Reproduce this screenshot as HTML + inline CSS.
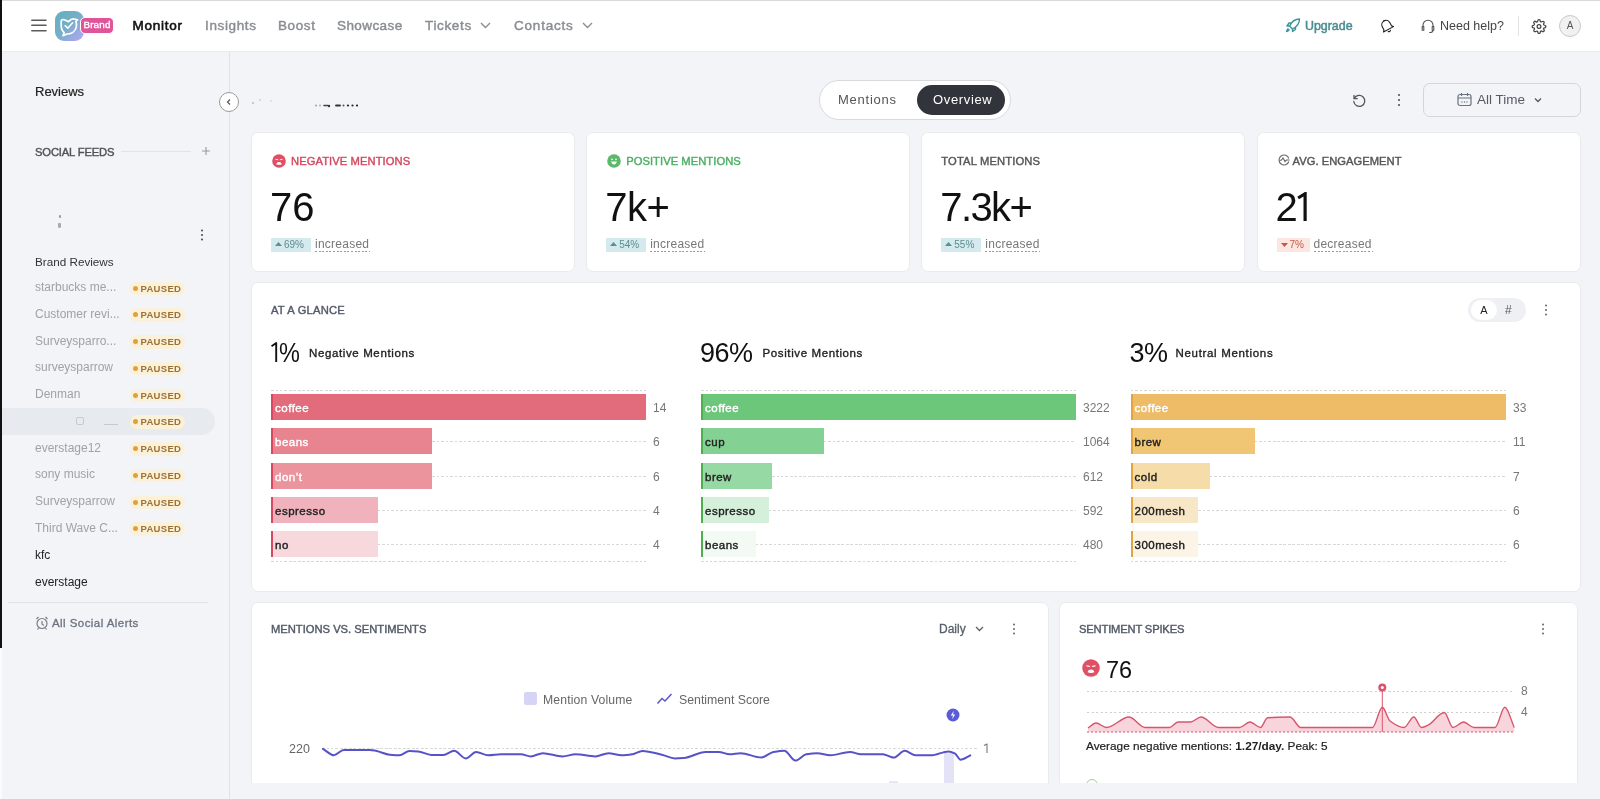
<!DOCTYPE html>
<html><head><meta charset="utf-8">
<style>
*{margin:0;padding:0;box-sizing:border-box}
html,body{width:1600px;height:799px;overflow:hidden;background:#f2f4f7;font-family:"Liberation Sans",sans-serif;color:#222}
.a{position:absolute;white-space:nowrap}
.t{position:absolute;white-space:nowrap;line-height:1}
#topline{left:0;top:0;width:1600px;height:1px;background:#d9d9d9}
#header{left:0;top:1px;width:1600px;height:51px;background:#fff;border-bottom:1px solid #ebecef}
#blk{left:0;top:0;width:2px;height:648px;background:#111}
#sidebar{left:2px;top:52px;width:228px;height:747px;background:#f2f4f7;border-right:1px solid #dfe1e5}
.nav{font-size:13.5px;color:#8a8d93;-webkit-text-stroke:.45px currentColor}
.med{-webkit-text-stroke:.3px currentColor}
.card{position:absolute;background:#fff;border:1px solid #e9eaed;border-radius:7px}
.lbl{font-size:11.2px;-webkit-text-stroke:.42px currentColor}
.big{font-size:40px;color:#111}
.badge{position:absolute;height:13px;font-size:9.5px;line-height:13px;padding:0 4px;border-radius:2px}
.chg{font-size:12px;color:#777;line-height:12px;letter-spacing:.25px}
.sec{font-size:11.2px;color:#535a68;-webkit-text-stroke:.42px currentColor}
.pct{font-size:27px;color:#111;letter-spacing:-0.5px}
.side{font-size:12px;color:#9a9ca2}
.paused{position:absolute;left:130px;width:55px;height:13.5px;border-radius:7px;background:#fbf0d8;color:#9c7236;font-size:9.5px;font-weight:bold;line-height:14px;padding-left:10.5px;letter-spacing:.3px}
.paused:before{content:"";position:absolute;left:3px;top:4px;width:5px;height:5px;border-radius:50%;background:#e0a040}
.bar{position:absolute;height:26px}
.bar span{position:absolute;left:9px;top:8px;font-size:11.5px;line-height:12px;-webkit-text-stroke:.4px currentColor;letter-spacing:.5px}
.val{position:absolute;font-size:12px;color:#777;line-height:12px}
.dl{position:absolute;height:1px;background:repeating-linear-gradient(90deg,#d8d8d8 0 2.5px,transparent 2.5px 4.5px)}
</style></head><body><div id="wrap" style="position:absolute;left:0;top:0;width:1600px;height:799px;will-change:transform">
<div class="a" id="topline"></div>
<div class="a" id="header"></div>
<div class="a" id="sidebar"></div>
<div class="a" id="blk"></div>
<div class="a" style="left:0;top:648px;width:2px;height:151px;background:#fbfbfb"></div>

<!-- HEADER -->
<svg class="a" style="left:30px;top:19px" width="17" height="13" viewBox="0 0 17 13"><path d="M1.8 1.3h14.2M1.8 6.3h14.2M1.8 11.8h14.2" stroke="#5a5a5a" stroke-width="1.5" stroke-linecap="round"/></svg>
<div class="a" style="left:55px;top:11px;width:29px;height:30px;border-radius:9px;background:linear-gradient(135deg,#62b0bf 0%,#75aec8 45%,#a6a8ec 85%,#b6a8f4 100%)"></div>
<svg class="a" style="left:55px;top:11px" width="29" height="30" viewBox="0 0 29 30"><path d="M6.2,10.2 C6.2,8.6 7.6,8.2 9.2,8.8 L13.6,10.6 C15.2,8.8 17.6,7.4 19.6,8 L22.6,8.8 L20.8,10.4 C21.6,12 21.8,14.2 21.2,16.4 C20.2,20.4 16.4,23 12,23 L8,24.6 L9.2,21.6 C7.2,20 6.2,17.4 6.2,14.2 Z" fill="none" stroke="#fff" stroke-width="1.7" stroke-linejoin="round"/><path d="M10.2,14.6 L12.8,17.2 L17.6,11.8" fill="none" stroke="#fff" stroke-width="1.6" stroke-linecap="round" stroke-linejoin="round"/></svg>
<div class="a" style="left:80px;top:17px;width:34px;height:17px;border-radius:5px;background:#e0559a;border:1.5px solid #fff;color:#fff;font-size:9.8px;-webkit-text-stroke:.35px #fff;line-height:14px;text-align:center;letter-spacing:.2px">Brand</div>
<div class="t nav" style="left:132.5px;top:19px;color:#111;font-weight:normal;-webkit-text-stroke:.6px #111;letter-spacing:.75px">Monitor</div>
<div class="t nav" style="left:205px;top:19px;letter-spacing:0.63px">Insights</div>
<div class="t nav" style="left:278px;top:19px;letter-spacing:0.59px">Boost</div>
<div class="t nav" style="left:337px;top:19px;letter-spacing:0.41px">Showcase</div>
<div class="t nav" style="left:425px;top:19px;letter-spacing:0.65px">Tickets</div>
<svg class="a" style="left:480px;top:22px" width="11" height="7" viewBox="0 0 11 7"><path d="M1 1l4.5 4.5L10 1" fill="none" stroke="#8a8d93" stroke-width="1.4"/></svg>
<div class="t nav" style="left:514px;top:19px;letter-spacing:0.8px">Contacts</div>
<svg class="a" style="left:582px;top:22px" width="11" height="7" viewBox="0 0 11 7"><path d="M1 1l4.5 4.5L10 1" fill="none" stroke="#8a8d93" stroke-width="1.4"/></svg>

<svg class="a" style="left:1285px;top:18px" width="16" height="15" viewBox="0 0 16 15"><path d="M14.5 1C10 1 6.5 4 4.5 8l3 3c4-2 7-5.5 7-10z M4.5 8L2 8l2-3h3 M7.5 11v2.5l3-2v-3 M3.5 10.5c-1 .5-2 2.5-2 3 .5 0 2.5-1 3-2" fill="none" stroke="#3d9497" stroke-width="1.4" stroke-linejoin="round"/></svg>
<div class="t" style="left:1305px;top:20px;font-size:12.4px;color:#4a8d91;-webkit-text-stroke:.5px currentColor">Upgrade</div>
<svg class="a" style="left:1378px;top:17px" width="17" height="17" viewBox="0 0 17 17"><g transform="rotate(-28 8.5 8.5)"><path d="M4.2 11.2V7.6a4.3 4.3 0 0 1 8.6 0v3.6l1.4 1.6H2.8z M7 14.2a1.6 1.6 0 0 0 3 0 M8.5 2.2v1" fill="none" stroke="#222" stroke-width="1.1" stroke-linejoin="round"/></g></svg>
<svg class="a" style="left:1420px;top:18px" width="16" height="16" viewBox="0 0 16 16"><path d="M3 9V7.2a5 5 0 0 1 10 0V9 M2.2 8.6h1.6v3.6H2.2z M12.2 8.6h1.6v3.6h-1.6z M13 12.2c0 1.4-1.6 2.3-3.8 2.3" fill="none" stroke="#555" stroke-width="1.1" stroke-linejoin="round"/></svg>
<div class="t" style="left:1440px;top:20px;font-size:12.5px;color:#444">Need help?</div>
<div class="a" style="left:1518px;top:16px;width:1px;height:20px;background:#e3e3e3"></div>
<svg class="a" style="left:1531px;top:19px" width="16" height="15" viewBox="0 0 24 24"><path d="M12 15a3 3 0 1 0 0-6 3 3 0 0 0 0 6z" fill="none" stroke="#444" stroke-width="2"/><path d="M19.4 15a1.65 1.65 0 0 0 .33 1.82l.06.06a2 2 0 1 1-2.83 2.83l-.06-.06a1.650 1.65 0 0 0-1.82-.33 1.65 1.65 0 0 0-1 1.51V21a2 2 0 1 1-4 0v-.09A1.65 1.65 0 0 0 9 19.4a1.65 1.65 0 0 0-1.820.33l-.06.06a2 2 0 1 1-2.83-2.83l.06-.06A1.65 1.65 0 0 0 4.680 15a1.65 1.65 0 0 0-1.51-1H3a2 2 0 1 1 0-4h.09A1.65 1.65 0 0 0 4.6 9a1.65 1.65 0 0 0-.33-1.82l-.06-.06a2 2 0 1 1 2.83-2.83l.06.06A1.65 1.65 0 0 0 9 4.68a1.65 1.65 0 0 0 1-1.51V3a2 2 0 1 1 4 0v.09a1.65 1.65 0 0 0 1 1.51 1.65 1.65 0 0 0 1.82-.33l.06-.06a2 2 0 1 1 2.83 2.83l-.06.06A1.65 1.65 0 0 0 19.4 9a1.65 1.65 0 0 0 1.51 1H21a2 2 0 1 1 0 4h-.09a1.65 1.65 0 0 0-1.51 1z" fill="none" stroke="#444" stroke-width="2"/></svg>
<div class="a" style="left:1559px;top:15px;width:22px;height:22px;border-radius:50%;background:#f1f1f1;border:1px solid #c9c9c9;color:#555;font-size:10px;line-height:20px;text-align:center">A</div>

<!-- SIDEBAR -->
<div class="t" style="left:35px;top:85px;font-size:13px;color:#222;-webkit-text-stroke:.2px currentColor">Reviews</div>
<div class="a" style="left:219px;top:92px;width:20px;height:20px;border-radius:50%;background:#fff;border:1px solid #9a9a9a"></div>
<svg class="a" style="left:225px;top:98px" width="8" height="8" viewBox="0 0 8 8"><path d="M5 1.5L2.5 4 5 6.5" fill="none" stroke="#555" stroke-width="1.2"/></svg>
<div class="t sec" style="left:35px;top:147px;color:#505258;letter-spacing:-.14px">SOCIAL FEEDS</div>
<div class="a" style="left:121px;top:151px;width:70px;height:1px;background:#e2e3e6"></div>
<svg class="a" style="left:201px;top:146px" width="10" height="10" viewBox="0 0 10 10"><path d="M5 1v8M1 5h8" stroke="#999" stroke-width="1.1"/></svg>
<svg class="a" style="left:200px;top:228px" width="4" height="14" viewBox="0 0 4 14"><circle cx="2" cy="2.5" r="1.1" fill="#555"/><circle cx="2" cy="7" r="1.1" fill="#555"/><circle cx="2" cy="11.5" r="1.1" fill="#555"/></svg>
<div class="t side" style="left:35px;top:256px;color:#333;font-size:11.7px">Brand Reviews</div>
<div class="a" style="left:2px;top:408px;width:213px;height:27px;border-radius:0 14px 14px 0;background:#e7eaee"></div>
<div class="t side" style="left:35px;top:281.2px;color:#a0a2a8">starbucks me...</div>
<div class="paused" style="top:281.5px">PAUSED</div>
<div class="t side" style="left:35px;top:307.9px;color:#a0a2a8">Customer revi...</div>
<div class="paused" style="top:308.2px">PAUSED</div>
<div class="t side" style="left:35px;top:334.7px;color:#a0a2a8">Surveysparro...</div>
<div class="paused" style="top:335.0px">PAUSED</div>
<div class="t side" style="left:35px;top:361.4px;color:#a0a2a8">surveysparrow</div>
<div class="paused" style="top:361.8px">PAUSED</div>
<div class="t side" style="left:35px;top:388.2px;color:#a0a2a8">Denman</div>
<div class="paused" style="top:388.5px">PAUSED</div>
<div class="paused" style="top:415.2px">PAUSED</div>
<div class="t side" style="left:35px;top:441.7px;color:#a0a2a8">everstage12</div>
<div class="paused" style="top:442.0px">PAUSED</div>
<div class="t side" style="left:35px;top:468.4px;color:#a0a2a8">sony music</div>
<div class="paused" style="top:468.8px">PAUSED</div>
<div class="t side" style="left:35px;top:495.2px;color:#a0a2a8">Surveysparrow</div>
<div class="paused" style="top:495.5px">PAUSED</div>
<div class="t side" style="left:35px;top:522.0px;color:#a0a2a8">Third Wave C...</div>
<div class="paused" style="top:522.2px">PAUSED</div>
<div class="t side" style="left:35px;top:548.7px;color:#222">kfc</div>
<div class="t side" style="left:35px;top:575.5px;color:#222">everstage</div>
<div class="a" style="left:76px;top:417px;width:8px;height:8px;border:1px solid #c8cace;border-radius:2px"></div>
<div class="a" style="left:104px;top:420px;width:14px;height:5px;border-bottom:1px solid #c8cace"></div>
<div class="a" style="left:58.5px;top:215px;width:2.5px;height:2.5px;border-radius:50%;background:#999"></div>
<div class="a" style="left:58px;top:223px;width:3px;height:5px;border-radius:1px 1px 2px 2px;background:#aaa"></div>
<svg class="a" style="left:250px;top:92px" width="115" height="18" viewBox="0 0 115 18"><circle cx="3" cy="11" r="1.2" fill="#c8c8cc"/><circle cx="10" cy="8" r="1" fill="#d0d0d4"/><circle cx="21" cy="9" r="1" fill="#d8d8dc"/><circle cx="66" cy="13.5" r=".9" fill="#999"/><circle cx="70" cy="13.5" r=".9" fill="#aaa"/><path d="M74 13.5h3.5" stroke="#444" stroke-width="1.6" stroke-linecap="round"/><circle cx="79" cy="14" r="1.2" fill="#333"/><path d="M86 13.5h4" stroke="#333" stroke-width="1.8" stroke-linecap="round"/><circle cx="93.5" cy="13.5" r="1" fill="#555"/><circle cx="98" cy="13.5" r="1.1" fill="#222"/><circle cx="102.5" cy="13.5" r="1.1" fill="#222"/><circle cx="107" cy="13.5" r="1.1" fill="#222"/></svg>
<div class="a" style="left:8px;top:602px;width:200px;height:1px;background:#e2e3e6"></div>
<svg class="a" style="left:35px;top:616px" width="14" height="14" viewBox="0 0 14 14"><circle cx="7" cy="7.5" r="5" fill="none" stroke="#7a808a" stroke-width="1.2"/><path d="M7 5v3l1.8 1.5 M1.5 3l2-2 M12.5 3l-2-2 M3.5 12l-1 1.5 M10.5 12l1 1.5" fill="none" stroke="#7a808a" stroke-width="1.2"/></svg>
<div class="t med" style="left:52px;top:618px;font-size:11.5px;letter-spacing:.44px;color:#6b7280">All Social Alerts</div>

<!-- MAIN TOP -->
<div class="a" style="left:819px;top:80px;width:192px;height:40px;border-radius:20px;background:#fff;border:1px solid #d8d9dc"></div>
<div class="t" style="left:838px;top:93px;font-size:13px;letter-spacing:.75px;color:#555">Mentions</div>
<div class="a" style="left:917px;top:85px;width:88px;height:30px;border-radius:15px;background:#32343b"></div>
<div class="t" style="left:933px;top:93px;font-size:13px;letter-spacing:.65px;color:#fff">Overview</div>
<svg class="a" style="left:1351px;top:92px" width="16" height="16" viewBox="0 0 16 16"><path d="M3 3.5v3.2h3.2 M3.3 6.5A5.5 5.5 0 1 1 2.8 9.5" fill="none" stroke="#555" stroke-width="1.3" stroke-linecap="round"/></svg>
<svg class="a" style="left:1397px;top:93px" width="4" height="14" viewBox="0 0 4 14"><circle cx="2" cy="2" r="1.1" fill="#555"/><circle cx="2" cy="7" r="1.1" fill="#555"/><circle cx="2" cy="12" r="1.1" fill="#555"/></svg>
<div class="a" style="left:1423px;top:83px;width:158px;height:34px;border-radius:7px;border:1px solid #d2d5db"></div>
<svg class="a" style="left:1457px;top:92px" width="15" height="15" viewBox="0 0 15 15"><rect x="1" y="2.5" width="13" height="11" rx="2" fill="none" stroke="#6b7280" stroke-width="1.2"/><path d="M1 6h13 M4.5 1v3 M10.5 1v3" stroke="#6b7280" stroke-width="1.2"/><circle cx="5" cy="10" r=".7" fill="#6b7280"/><circle cx="7.5" cy="10" r=".7" fill="#6b7280"/><circle cx="10" cy="10" r=".7" fill="#6b7280"/></svg>
<div class="t" style="left:1477px;top:93px;font-size:13.5px;color:#555b66">All Time</div>
<svg class="a" style="left:1534px;top:97px" width="8" height="6" viewBox="0 0 8 6"><path d="M1 1.5l3 3 3-3" fill="none" stroke="#555" stroke-width="1.3"/></svg>

<div class="card" style="left:251.0px;top:132px;width:324.0px;height:139.5px"></div>
<svg class="a" style="left:272.0px;top:154px" width="14" height="14" viewBox="0 0 14 14"><circle cx="7" cy="7" r="6.8" fill="#e04f64"/><path d="M3.8 5.4l2 .3M10.2 5.4l-2 .3" stroke="#fff" stroke-width="1" stroke-linecap="round" opacity=".9"/><path d="M4.4 10.4c0-1.6 1.2-2.3 2.6-2.3s2.6.7 2.6 2.3c-.8.3-1.6.4-2.6.4s-1.8-.1-2.6-.4z" fill="#fff"/></svg>
<div class="t lbl" style="left:291.0px;top:156px;color:#d4495f;letter-spacing:0.08px">NEGATIVE MENTIONS</div>
<div class="t big" style="left:270.0px;top:187px;letter-spacing:0">76</div>
<div class="a" style="left:271.0px;top:237.5px;width:40px;height:14px;background:#d5eaed"></div>
<svg class="a" style="left:275.0px;top:241.5px" width="7" height="4" viewBox="0 0 7 4" fill="#5b8d93"><path d="M0 4L3.5 0 7 4z"/></svg>
<div class="t" style="left:284.0px;top:240px;font-size:10px;color:#5b8d93">69%</div>
<div class="t chg" style="left:315.0px;top:238px">increased</div>
<div class="a" style="left:315.0px;top:251px;width:55px;height:1px;background:repeating-linear-gradient(90deg,#9a9a9a 0 2px,transparent 2px 3.6px)"></div>
<div class="card" style="left:586.2px;top:132px;width:324.0px;height:139.5px"></div>
<svg class="a" style="left:607.2px;top:154px" width="14" height="14" viewBox="0 0 14 14"><circle cx="7" cy="7" r="6.8" fill="#5cb96b"/><circle cx="5" cy="5.3" r=".9" fill="#fff"/><circle cx="9" cy="5.3" r=".9" fill="#fff"/><path d="M4.2 7.6h5.6c-.3 2-1.4 3-2.8 3s-2.5-1-2.8-3z" fill="#fff"/></svg>
<div class="t lbl" style="left:626.2px;top:156px;color:#4caf63;letter-spacing:0.05px">POSITIVE MENTIONS</div>
<div class="t big" style="left:605.2px;top:187px;letter-spacing:-0.5px">7k+</div>
<div class="a" style="left:606.2px;top:237.5px;width:40px;height:14px;background:#d5eaed"></div>
<svg class="a" style="left:610.2px;top:241.5px" width="7" height="4" viewBox="0 0 7 4" fill="#5b8d93"><path d="M0 4L3.5 0 7 4z"/></svg>
<div class="t" style="left:619.2px;top:240px;font-size:10px;color:#5b8d93">54%</div>
<div class="t chg" style="left:650.2px;top:238px">increased</div>
<div class="a" style="left:650.2px;top:251px;width:55px;height:1px;background:repeating-linear-gradient(90deg,#9a9a9a 0 2px,transparent 2px 3.6px)"></div>
<div class="card" style="left:921.3px;top:132px;width:324.0px;height:139.5px"></div>
<div class="t lbl" style="left:941.3px;top:156px;color:#555;letter-spacing:0.15px">TOTAL MENTIONS</div>
<div class="t big" style="left:940.3px;top:187px;letter-spacing:-1.6px">7.3k+</div>
<div class="a" style="left:941.3px;top:237.5px;width:40px;height:14px;background:#d5eaed"></div>
<svg class="a" style="left:945.3px;top:241.5px" width="7" height="4" viewBox="0 0 7 4" fill="#5b8d93"><path d="M0 4L3.5 0 7 4z"/></svg>
<div class="t" style="left:954.3px;top:240px;font-size:10px;color:#5b8d93">55%</div>
<div class="t chg" style="left:985.3px;top:238px">increased</div>
<div class="a" style="left:985.3px;top:251px;width:55px;height:1px;background:repeating-linear-gradient(90deg,#9a9a9a 0 2px,transparent 2px 3.6px)"></div>
<div class="card" style="left:1256.5px;top:132px;width:324.0px;height:139.5px"></div>
<svg class="a" style="left:1277.5px;top:154px" width="12" height="12" viewBox="0 0 12 12"><path d="M10.8 4.5A5 5 0 1 0 10.8 7.5" fill="none" stroke="#666" stroke-width="1.1"/><path d="M1.5 6.5l2-0.5 1.5-2 2 3.5 1.5-1.5h3" fill="none" stroke="#666" stroke-width="1.1"/></svg>
<div class="t lbl" style="left:1292.5px;top:156px;color:#555;letter-spacing:0.03px">AVG. ENGAGEMENT</div>
<div class="t big" style="left:1275.5px;top:187px">2</div>
<svg class="a" style="left:1295.5px;top:192px" width="12" height="31" viewBox="0 0 12 32"><path d="M2 6.2L9.2 1.8V30" fill="none" stroke="#111" stroke-width="3.3" stroke-linejoin="miter"/></svg>
<div class="a" style="left:1276.5px;top:237.5px;width:33px;height:14px;background:#fce6e1"></div>
<svg class="a" style="left:1280.5px;top:242.5px" width="7" height="4" viewBox="0 0 7 4" fill="#c25a45"><path d="M0 0L3.5 4 7 0z"/></svg>
<div class="t" style="left:1289.5px;top:240px;font-size:10px;color:#c25a45">7%</div>
<div class="t chg" style="left:1313.5px;top:238px">decreased</div>
<div class="a" style="left:1313.5px;top:251px;width:59px;height:1px;background:repeating-linear-gradient(90deg,#9a9a9a 0 2px,transparent 2px 3.6px)"></div>
<div class="card" style="left:251px;top:282px;width:1330px;height:310px"></div>
<div class="t sec" style="left:271px;top:305px;letter-spacing:.2px">AT A GLANCE</div>
<div class="a" style="left:1468px;top:298px;width:58px;height:24px;border-radius:12px;background:#eef0f3"></div>
<div class="a" style="left:1471px;top:300px;width:26px;height:20px;border-radius:10px;background:#fff;font-size:11px;color:#222;text-align:center;line-height:21px">A</div>
<div class="t" style="left:1505px;top:304px;font-size:12px;color:#555a66">#</div>
<svg class="a" style="left:1544px;top:303px" width="4" height="14" viewBox="0 0 4 14"><circle cx="2" cy="2.5" r="1" fill="#666"/><circle cx="2" cy="7" r="1" fill="#666"/><circle cx="2" cy="11.5" r="1" fill="#666"/></svg>
<svg class="a" style="left:271.0px;top:342px" width="8" height="21" viewBox="0 0 8 21"><path d="M0.5 4.2L5.2 1V20" fill="none" stroke="#111" stroke-width="1.9" stroke-linejoin="round"/></svg>
<div class="t pct" style="left:279.0px;top:340px;transform:scaleX(.87);transform-origin:0 0">%</div>
<div class="t" style="left:309.0px;top:348px;font-size:11.5px;letter-spacing:0.62px;color:#222;-webkit-text-stroke:.35px currentColor">Negative Mentions</div>
<div class="dl" style="left:271.0px;top:390px;width:375.0px"></div>
<div class="dl" style="left:271.0px;top:561px;width:375.0px"></div>
<div class="dl" style="left:646.0px;top:407.0px;width:0.0px"></div>
<div class="bar" style="left:271.0px;top:394.0px;width:375.0px;background:#e26b7c;border-left:2px solid #d9485e"><span style="color:#fff;left:2px">coffee</span></div>
<div class="val" style="left:653.0px;top:402.0px">14</div>
<div class="dl" style="left:431.6px;top:441.2px;width:214.4px"></div>
<div class="bar" style="left:271.0px;top:428.2px;width:160.6px;background:#e8848f;border-left:2px solid #d9485e"><span style="color:#fff;left:2px">beans</span></div>
<div class="val" style="left:653.0px;top:436.2px">6</div>
<div class="dl" style="left:431.6px;top:475.5px;width:214.4px"></div>
<div class="bar" style="left:271.0px;top:462.5px;width:160.6px;background:#eb949e;border-left:2px solid #d9485e"><span style="color:#fff;left:2px">don’t</span></div>
<div class="val" style="left:653.0px;top:470.5px">6</div>
<div class="dl" style="left:377.7px;top:509.8px;width:268.3px"></div>
<div class="bar" style="left:271.0px;top:496.8px;width:106.7px;background:#f0b3bd;border-left:2px solid #d9485e"><span style="color:#222;left:2px">espresso</span></div>
<div class="val" style="left:653.0px;top:504.8px">4</div>
<div class="dl" style="left:377.7px;top:544.0px;width:268.3px"></div>
<div class="bar" style="left:271.0px;top:531.0px;width:106.7px;background:#f7d8dd;border-left:2px solid #d9485e"><span style="color:#222;left:2px">no</span></div>
<div class="val" style="left:653.0px;top:539.0px">4</div>
<div class="t pct" style="left:700.0px;top:340px">96%</div>
<div class="t" style="left:762.6px;top:348px;font-size:11.5px;letter-spacing:0.6px;color:#222;-webkit-text-stroke:.35px currentColor">Positive Mentions</div>
<div class="dl" style="left:701.0px;top:390px;width:375.0px"></div>
<div class="dl" style="left:701.0px;top:561px;width:375.0px"></div>
<div class="dl" style="left:1076.0px;top:407.0px;width:0.0px"></div>
<div class="bar" style="left:701.0px;top:394.0px;width:375.0px;background:#6cc77a;border-left:2px solid #4caf50"><span style="color:#fff;left:2px">coffee</span></div>
<div class="val" style="left:1083.0px;top:402.0px">3222</div>
<div class="dl" style="left:824.3px;top:441.2px;width:251.7px"></div>
<div class="bar" style="left:701.0px;top:428.2px;width:123.3px;background:#84d293;border-left:2px solid #4caf50"><span style="color:#222;left:2px">cup</span></div>
<div class="val" style="left:1083.0px;top:436.2px">1064</div>
<div class="dl" style="left:772.0px;top:475.5px;width:304.0px"></div>
<div class="bar" style="left:701.0px;top:462.5px;width:71.0px;background:#97d9a4;border-left:2px solid #4caf50"><span style="color:#222;left:2px">brew</span></div>
<div class="val" style="left:1083.0px;top:470.5px">612</div>
<div class="dl" style="left:769.0px;top:509.8px;width:307.0px"></div>
<div class="bar" style="left:701.0px;top:496.8px;width:68.0px;background:#d5f0da;border-left:2px solid #4caf50"><span style="color:#222;left:2px">espresso</span></div>
<div class="val" style="left:1083.0px;top:504.8px">592</div>
<div class="dl" style="left:755.6px;top:544.0px;width:320.4px"></div>
<div class="bar" style="left:701.0px;top:531.0px;width:54.6px;background:#f3faf4;border-left:2px solid #4caf50"><span style="color:#222;left:2px">beans</span></div>
<div class="val" style="left:1083.0px;top:539.0px">480</div>
<div class="t pct" style="left:1129.5px;top:340px">3%</div>
<div class="t" style="left:1175.5px;top:348px;font-size:11.5px;letter-spacing:0.68px;color:#222;-webkit-text-stroke:.35px currentColor">Neutral Mentions</div>
<div class="dl" style="left:1130.5px;top:390px;width:375.5px"></div>
<div class="dl" style="left:1130.5px;top:561px;width:375.5px"></div>
<div class="dl" style="left:1506.0px;top:407.0px;width:0.0px"></div>
<div class="bar" style="left:1130.5px;top:394.0px;width:375.5px;background:#eebc66;border-left:2px solid #e0a540"><span style="color:#fff;left:2px">coffee</span></div>
<div class="val" style="left:1513.0px;top:402.0px">33</div>
<div class="dl" style="left:1255.4px;top:441.2px;width:250.6px"></div>
<div class="bar" style="left:1130.5px;top:428.2px;width:124.9px;background:#f0c675;border-left:2px solid #e0a540"><span style="color:#222;left:2px">brew</span></div>
<div class="val" style="left:1513.0px;top:436.2px">11</div>
<div class="dl" style="left:1210.0px;top:475.5px;width:296.0px"></div>
<div class="bar" style="left:1130.5px;top:462.5px;width:79.5px;background:#f5dca8;border-left:2px solid #e0a540"><span style="color:#222;left:2px">cold</span></div>
<div class="val" style="left:1513.0px;top:470.5px">7</div>
<div class="dl" style="left:1198.4px;top:509.8px;width:307.6px"></div>
<div class="bar" style="left:1130.5px;top:496.8px;width:67.9px;background:#f8e7c6;border-left:2px solid #e0a540"><span style="color:#222;left:2px">200mesh</span></div>
<div class="val" style="left:1513.0px;top:504.8px">6</div>
<div class="dl" style="left:1198.0px;top:544.0px;width:308.0px"></div>
<div class="bar" style="left:1130.5px;top:531.0px;width:67.5px;background:#fcf4e6;border-left:2px solid #e0a540"><span style="color:#222;left:2px">300mesh</span></div>
<div class="val" style="left:1513.0px;top:539.0px">6</div>
<div class="card" style="left:251px;top:602px;width:798px;height:260px"></div>
<div class="t sec" style="left:271px;top:624px">MENTIONS VS. SENTIMENTS</div>
<div class="t med" style="left:939px;top:623px;font-size:12px;color:#5a606b">Daily</div>
<svg class="a" style="left:975px;top:626px" width="9" height="6" viewBox="0 0 9 6"><path d="M1 1l3.5 3.5L8 1" fill="none" stroke="#5a606b" stroke-width="1.3"/></svg>
<svg class="a" style="left:1012px;top:622px" width="4" height="14" viewBox="0 0 4 14"><circle cx="2" cy="2.5" r="1" fill="#666"/><circle cx="2" cy="7" r="1" fill="#666"/><circle cx="2" cy="11.5" r="1" fill="#666"/></svg>
<div class="a" style="left:524px;top:692px;width:13px;height:13px;border-radius:2px;background:#d6d4f5"></div>
<div class="t" style="left:543px;top:694px;font-size:12.2px;color:#666;letter-spacing:.15px">Mention Volume</div>
<svg class="a" style="left:656px;top:692px" width="17" height="13" viewBox="0 0 17 13"><path d="M1.5 11.5l4.5-5 3 2.5 6.5-7" fill="none" stroke="#5b57c9" stroke-width="1.5"/></svg>
<div class="t" style="left:679px;top:694px;font-size:12.3px;color:#666">Sentiment Score</div>
<div class="t" style="left:289px;top:743px;font-size:12.5px;color:#666">220</div>
<svg class="a" style="left:983px;top:743px" width="6" height="11" viewBox="0 0 6 11"><path d="M1 2.6L4 1V10" fill="none" stroke="#777" stroke-width="1.1" stroke-linejoin="round"/></svg>
<div class="dl" style="left:322px;top:748px;width:655px"></div>
<div class="a" style="left:944px;top:753px;width:10px;height:40px;background:#e4e2f6"></div>
<div class="a" style="left:889px;top:781px;width:9px;height:10px;background:#e8e6f6"></div>
<svg class="a" style="left:946px;top:708px" width="14" height="14" viewBox="0 0 14 14"><circle cx="7" cy="7" r="6.5" fill="#5b5bd6"/><path d="M7.8 2.8L4.8 7.6h2.2L6.2 11.2l3-4.8H7z" fill="#fff"/></svg>
<svg class="a" style="left:0;top:0" width="1600" height="799"><path d="M323.0,748.8 C326.6,751.0 330.3,755.3 333.9,755.3 C337.2,755.3 340.5,749.9 343.8,749.9 C352.5,749.9 361.3,749.9 370.0,749.9 C372.2,749.9 374.4,750.6 376.6,751.0 C381.0,751.9 385.3,754.3 389.7,754.7 C393.0,755.0 396.2,755.3 399.5,755.3 C402.8,755.3 406.1,751.0 409.4,751.0 C412.3,751.0 415.2,751.2 418.1,751.4 C422.5,751.7 426.9,754.9 431.3,754.9 C435.3,754.9 439.3,754.9 443.3,754.9 C446.9,754.9 450.6,750.8 454.2,750.8 C458.1,750.8 461.9,758.4 465.8,758.4 C469.2,758.4 472.7,752.0 476.1,752.0 C480.1,752.0 484.1,755.3 488.1,755.3 C492.5,755.3 496.9,754.3 501.3,754.3 C507.9,754.3 514.4,754.3 521.0,754.3 C524.3,754.3 527.5,756.4 530.8,756.4 C534.8,756.4 538.8,753.2 542.8,753.2 C549.4,753.2 555.9,756.4 562.5,756.4 C566.9,756.4 571.2,754.3 575.6,754.3 C582.2,754.3 588.7,756.4 595.3,756.4 C599.7,756.4 604.1,753.2 608.5,753.2 C612.9,753.2 617.2,755.3 621.6,755.3 C625.2,755.3 628.9,754.8 632.5,754.3 C635.8,753.8 639.1,751.0 642.4,751.0 C648.9,751.0 655.4,753.2 661.9,754.7 C666.3,755.7 670.6,758.4 675.0,758.4 C677.9,758.4 680.9,758.2 683.8,758.0 C691.1,757.5 698.3,752.0 705.6,752.0 C710.0,752.0 714.4,752.0 718.8,752.0 C722.4,752.0 726.1,754.3 729.7,754.3 C733.3,754.3 737.0,753.2 740.6,753.2 C747.5,753.2 754.5,757.5 761.4,757.5 C765.4,757.5 769.4,752.7 773.4,752.0 C777.1,751.4 780.7,750.8 784.4,750.8 C788.0,750.8 791.7,760.6 795.3,760.6 C799.0,760.6 802.6,754.9 806.3,754.3 C809.9,753.7 813.6,753.2 817.2,753.2 C821.6,753.2 825.9,755.3 830.3,755.3 C836.9,755.3 843.4,752.0 850.0,752.0 C853.7,752.0 857.3,754.3 861.0,754.3 C868.3,754.3 875.5,754.3 882.8,754.3 C886.5,754.3 890.1,757.5 893.8,757.5 C897.4,757.5 901.1,750.8 904.7,750.8 C908.3,750.8 912.0,755.3 915.6,755.3 C920.7,755.3 925.9,755.3 931.0,755.3 C936.8,755.3 942.7,751.4 948.5,751.4 C950.7,751.4 952.8,752.5 955.0,753.6 C956.8,754.6 958.7,759.7 960.5,759.7 C963.8,759.7 967.0,756.8 970.3,755.3" fill="none" stroke="#5652c8" stroke-width="2" stroke-linejoin="round" stroke-linecap="round"/></svg>
<div class="card" style="left:1059px;top:602px;width:519px;height:260px"></div>
<div class="t sec" style="left:1079px;top:624px;letter-spacing:-.17px">SENTIMENT SPIKES</div>
<svg class="a" style="left:1541px;top:622px" width="4" height="14" viewBox="0 0 4 14"><circle cx="2" cy="2.5" r="1" fill="#666"/><circle cx="2" cy="7" r="1" fill="#666"/><circle cx="2" cy="11.5" r="1" fill="#666"/></svg>
<svg class="a" style="left:1082px;top:659px" width="18" height="18" viewBox="0 0 14 14"><circle cx="7" cy="7" r="6.8" fill="#e04f64"/><path d="M3.8 5.4l2 .3M10.2 5.4l-2 .3" stroke="#fff" stroke-width="1" stroke-linecap="round" opacity=".9"/><path d="M4.4 10.4c0-1.6 1.2-2.3 2.6-2.3s2.6.7 2.6 2.3c-.8.3-1.6.4-2.6.4s-1.8-.1-2.6-.4z" fill="#fff"/></svg>
<div class="t" style="left:1106px;top:659px;font-size:23.5px;color:#111">76</div>
<div class="dl" style="left:1087px;top:691px;width:427px;background:repeating-linear-gradient(90deg,#cfcfcf 0 2px,transparent 2px 4.5px)"></div>
<div class="dl" style="left:1087px;top:712px;width:427px;background:repeating-linear-gradient(90deg,#cfcfcf 0 2px,transparent 2px 4.5px)"></div>
<div class="t" style="left:1521px;top:685px;font-size:12px;color:#777">8</div>
<div class="t" style="left:1521px;top:706px;font-size:12px;color:#777">4</div>
<svg class="a" style="left:0;top:0" width="1600" height="799"><path d="M1088.0,728.0 C1090.7,726.3 1093.3,723.0 1096.0,723.0 C1099.5,723.0 1103.0,727.5 1106.5,727.5 C1114.0,727.5 1121.5,717.0 1129.0,717.0 C1134.3,717.0 1139.7,727.5 1145.0,727.5 C1153.2,727.5 1161.3,727.5 1169.5,727.5 C1172.3,727.5 1175.2,722.0 1178.0,722.0 C1182.2,722.0 1186.3,722.0 1190.5,722.0 C1194.0,722.0 1197.5,717.0 1201.0,717.0 C1206.8,717.0 1212.7,727.5 1218.5,727.5 C1225.5,727.5 1232.5,727.5 1239.5,727.5 C1243.0,727.5 1246.5,722.0 1250.0,722.0 C1253.5,722.0 1257.0,727.5 1260.5,727.5 C1262.8,727.5 1265.2,718.0 1267.5,717.8 C1275.0,717.2 1282.5,717.0 1290.0,717.0 C1293.6,717.0 1297.2,727.5 1300.8,727.5 C1324.7,727.5 1348.6,727.5 1372.5,727.5 C1375.8,727.5 1379.0,707.3 1382.3,707.3 C1384.9,707.3 1387.4,719.0 1390.0,721.0 C1394.7,724.6 1399.3,727.5 1404.0,727.5 C1407.3,727.5 1410.5,717.0 1413.8,717.0 C1416.4,717.0 1418.9,727.5 1421.5,727.5 C1423.8,727.5 1426.2,726.0 1428.5,724.8 C1433.8,722.2 1439.0,712.5 1444.3,712.5 C1447.2,712.5 1450.1,727.5 1453.0,727.5 C1456.5,727.5 1460.0,722.0 1463.5,722.0 C1467.0,722.0 1470.5,727.5 1474.0,727.5 C1481.0,727.5 1488.0,727.5 1495.0,727.5 C1498.3,727.5 1501.5,707.3 1504.8,707.3 C1508.0,707.3 1511.1,720.8 1514.3,727.5 L1514.3,732 L1088,732 Z" fill="#f8d5dc"/><path d="M1088.0,728.0 C1090.7,726.3 1093.3,723.0 1096.0,723.0 C1099.5,723.0 1103.0,727.5 1106.5,727.5 C1114.0,727.5 1121.5,717.0 1129.0,717.0 C1134.3,717.0 1139.7,727.5 1145.0,727.5 C1153.2,727.5 1161.3,727.5 1169.5,727.5 C1172.3,727.5 1175.2,722.0 1178.0,722.0 C1182.2,722.0 1186.3,722.0 1190.5,722.0 C1194.0,722.0 1197.5,717.0 1201.0,717.0 C1206.8,717.0 1212.7,727.5 1218.5,727.5 C1225.5,727.5 1232.5,727.5 1239.5,727.5 C1243.0,727.5 1246.5,722.0 1250.0,722.0 C1253.5,722.0 1257.0,727.5 1260.5,727.5 C1262.8,727.5 1265.2,718.0 1267.5,717.8 C1275.0,717.2 1282.5,717.0 1290.0,717.0 C1293.6,717.0 1297.2,727.5 1300.8,727.5 C1324.7,727.5 1348.6,727.5 1372.5,727.5 C1375.8,727.5 1379.0,707.3 1382.3,707.3 C1384.9,707.3 1387.4,719.0 1390.0,721.0 C1394.7,724.6 1399.3,727.5 1404.0,727.5 C1407.3,727.5 1410.5,717.0 1413.8,717.0 C1416.4,717.0 1418.9,727.5 1421.5,727.5 C1423.8,727.5 1426.2,726.0 1428.5,724.8 C1433.8,722.2 1439.0,712.5 1444.3,712.5 C1447.2,712.5 1450.1,727.5 1453.0,727.5 C1456.5,727.5 1460.0,722.0 1463.5,722.0 C1467.0,722.0 1470.5,727.5 1474.0,727.5 C1481.0,727.5 1488.0,727.5 1495.0,727.5 C1498.3,727.5 1501.5,707.3 1504.8,707.3 C1508.0,707.3 1511.1,720.8 1514.3,727.5" fill="none" stroke="#d9546a" stroke-width="1.4"/><path d="M1087,732 L1514,732" stroke="#d9546a" stroke-width="1.2" stroke-dasharray="2 2"/><path d="M1382.3,691 L1382.3,732" stroke="#d9546a" stroke-width="1"/><circle cx="1382.3" cy="687.5" r="4" fill="#d9546a"/><circle cx="1382.3" cy="687.5" r="1.5" fill="#fff"/></svg>
<div class="t" style="left:1086px;top:741px;font-size:11.8px;color:#222;-webkit-text-stroke:.2px currentColor">Average negative mentions: <b style="-webkit-text-stroke:0">1.27/day.</b> Peak: 5</div>
<div class="a" style="left:1086px;top:779px;width:12px;height:12px;border-radius:50%;border:1.5px solid #9fcfa8"></div>
<div class="a" style="left:230px;top:783px;width:1370px;height:16px;background:#f2f4f7"></div>
</div></body></html>
